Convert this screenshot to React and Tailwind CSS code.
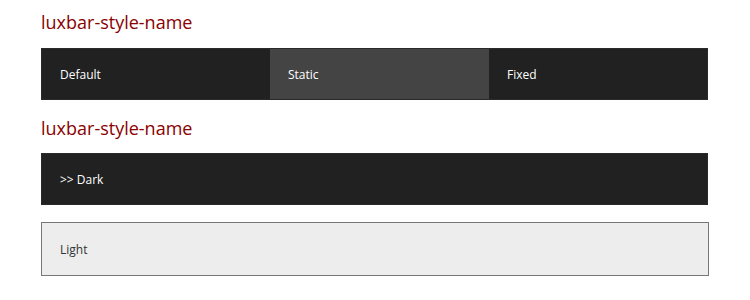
import React from "react";

const styles = ["Default", "Static", "Fixed"];

function App() {
  return (
    <div
      className="w-[750px] h-[300px] bg-white pl-[41px] text-[12px]"
      style={{ fontFamily: '"Open Sans", sans-serif' }}
    >
      <h2 className="pt-[10px] mb-[14px] text-[18px] leading-[24px] font-medium text-[#8b0000]">
        luxbar-style-name
      </h2>
      <div className="flex w-[667px] h-[52px] border border-[#2a2a2a] bg-[#212121] text-white">
        {styles.map((item, index) => (
          <div
            key={index}
            className={`flex items-center pl-[18px] pt-[1px] ${
              index === 0 ? "w-[228px]" : index === 1 ? "w-[219px]" : "flex-1"
            } ${item === "Static" ? "bg-[#444444]" : ""}`}
          >
            {item}
          </div>
        ))}
      </div>
      <h2 className="mt-[16px] mb-[13px] text-[18px] leading-[24px] font-medium text-[#8b0000]">
        luxbar-style-name
      </h2>
      <div className="flex items-center w-[667px] h-[52px] pl-[18px] pt-[1px] border border-[#2a2a2a] bg-[#212121] text-white">
        &gt;&gt; Dark
      </div>
      <div className="flex items-center w-[668px] h-[54px] mt-[17px] pl-[18px] pt-[1px] border border-[#777777] bg-[#ededed] text-[#333333]">
        Light
      </div>
    </div>
  );
}

export default App;
